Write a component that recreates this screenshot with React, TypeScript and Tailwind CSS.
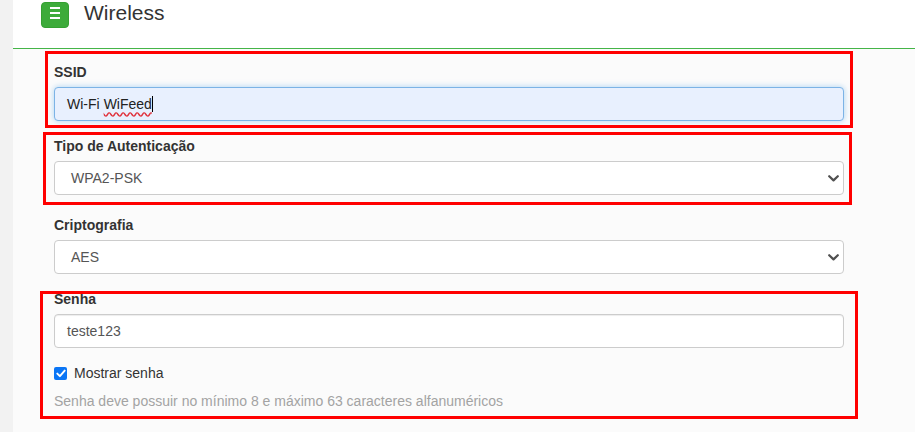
import React from "react";

const Chevron = () => (
  <svg width="11" height="7" viewBox="0 0 11 7" fill="none">
    <path d="M1.2 1.2 L5.5 5.4 L9.8 1.2" stroke="#505050" strokeWidth="2.2" strokeLinecap="round" strokeLinejoin="round" />
  </svg>
);

const Label = ({ children }: { children: React.ReactNode }) => (
  <div className="mb-[5px] text-[14px] font-bold leading-[20px] text-[#333]">{children}</div>
);

const SelectBox = ({ value }: { value: string }) => (
  <div className="flex h-[34px] w-[790px] items-center justify-between rounded-[4px] border border-[#cccccc] bg-white pl-[16px] pr-[4px] text-[14px] text-[#555]">
    <span>{value}</span>
    <Chevron />
  </div>
);

export default function App() {
  return (
    <div className="relative flex h-[432px] w-[915px] overflow-hidden font-['Liberation_Sans',Arial,sans-serif]">
      <div className="w-[13px] shrink-0 bg-[#f2f2f2]" />
      <div className="flex flex-1 flex-col">
        <div className="flex h-[49px] shrink-0 items-start border-b border-[#45b548] bg-white pl-[28px]">
          <div className="mt-[2px] flex h-[26px] w-[28px] flex-col items-center gap-[3px] rounded-[4px] border border-[#35a032] bg-[#3dab3a] pt-[4px]">
            <div className="h-[2px] w-[10px] bg-white" />
            <div className="h-[2px] w-[10px] bg-white" />
            <div className="h-[2px] w-[10px] bg-white" />
          </div>
          <div className="ml-[15px] mt-[2px] text-[21px] leading-[21px] text-[#333]">Wireless</div>
        </div>
        <div className="flex-1 bg-[#fbfbfb] pl-[41px] pt-[13px]">
          <Label>SSID</Label>
          <div className="flex h-[34px] w-[790px] items-center rounded-[4px] border border-[#7cb3e6] bg-[#e8f0fe] px-[12px] text-[14px] text-[#222] shadow-[0_0_6px_rgba(102,175,233,0.55)]">
            <span>Wi-Fi </span>
            <span className="ml-[4px] underline decoration-[#e0303a] decoration-wavy underline-offset-[3px]">WiFeed</span>
            <span className="inline-block h-[16px] w-px bg-black" />
          </div>

          <div className="mt-[15px]">
            <Label>Tipo de Autenticação</Label>
            <SelectBox value="WPA2-PSK" />
          </div>

          <div className="mt-[20px]">
            <Label>Criptografia</Label>
            <SelectBox value="AES" />
          </div>

          <div className="mt-[15px]">
            <Label>Senha</Label>
            <div className="flex h-[34px] w-[790px] items-center rounded-[4px] border border-[#cccccc] bg-white px-[12px] text-[14px] text-[#555] shadow-[inset_0_1px_1px_rgba(0,0,0,0.075)]">
              teste123
            </div>
            <div className="mt-[15px] flex h-[20px] items-center gap-[7px] text-[14px] text-[#333]">
              <span className="flex h-[13px] w-[13px] items-center justify-center rounded-[2px] bg-[#0a75f5]">
                <svg width="10" height="9" viewBox="0 0 10 9" fill="none">
                  <path d="M1.3 4.6 L3.9 7.2 L8.7 1.6" stroke="white" strokeWidth="1.9" strokeLinecap="round" strokeLinejoin="round" />
                </svg>
              </span>
              <span>Mostrar senha</span>
            </div>
            <div className="mt-[8px] text-[14px] leading-[20px] text-[#a3a3a3]">
              Senha deve possuir no mínimo 8 e máximo 63 caracteres alfanuméricos
            </div>
          </div>
        </div>
      </div>

      <div className="pointer-events-none absolute left-[45px] top-[51px] h-[77px] w-[808px] border-[3px] border-[#ff0000]" />
      <div className="pointer-events-none absolute left-[43px] top-[132px] h-[73px] w-[809px] border-[3px] border-[#ff0000]" />
      <div className="pointer-events-none absolute left-[40px] top-[291px] h-[128px] w-[818px] border-[3px] border-[#ff0000]" />
    </div>
  );
}
